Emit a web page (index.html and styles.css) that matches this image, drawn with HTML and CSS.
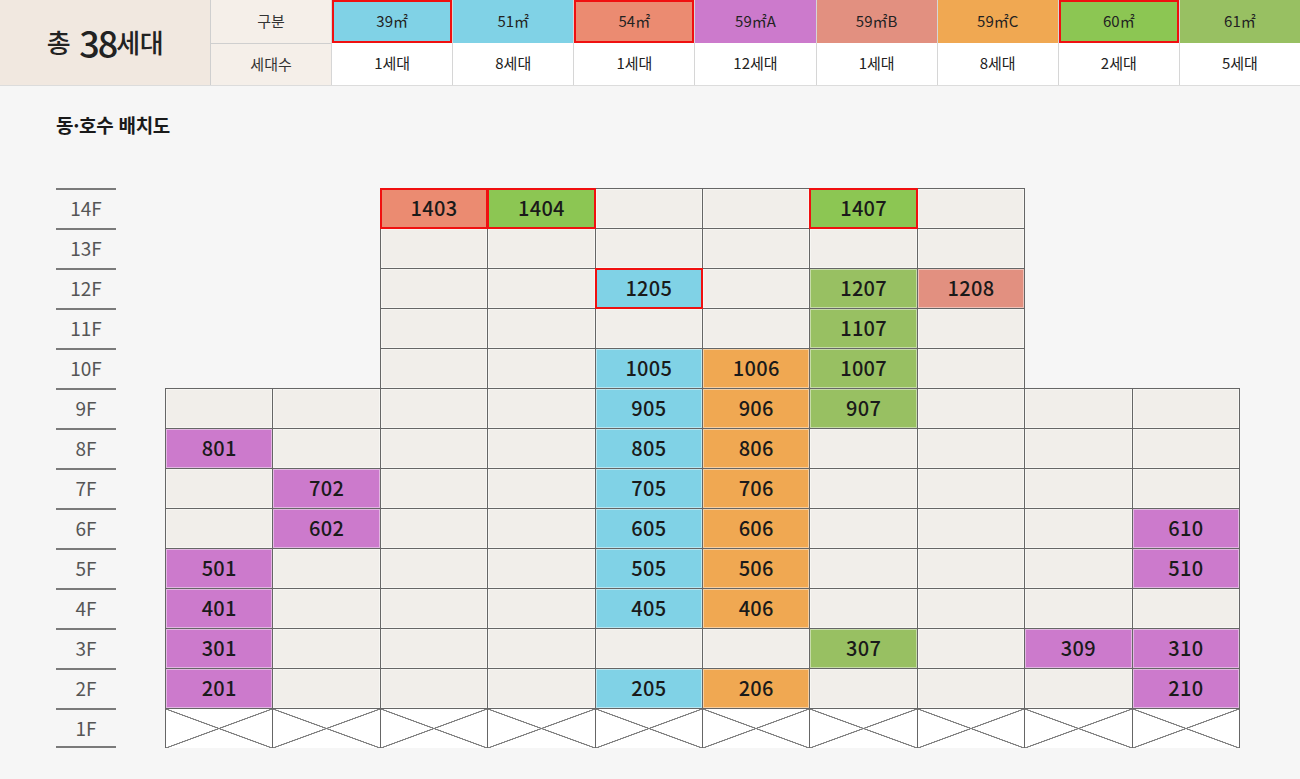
FILE: index.html
```html
<!DOCTYPE html>
<html lang="ko">
<head>
<meta charset="utf-8">
<title>동·호수 배치도</title>
<link rel="stylesheet" href="styles.css">
</head>
<body>
<header class="summary">
  <div class="total">총 <b>38</b>세대</div>
  <div class="th">구분</div>
  <div class="ty c39 hl">39㎡</div>
  <div class="ty c51">51㎡</div>
  <div class="ty c54 hl">54㎡</div>
  <div class="ty c59a">59㎡A</div>
  <div class="ty c59b">59㎡B</div>
  <div class="ty c59c">59㎡C</div>
  <div class="ty c60 hl">60㎡</div>
  <div class="ty c61">61㎡</div>
  <div class="th th-b">세대수</div>
  <div class="cnt">1세대</div>
  <div class="cnt">8세대</div>
  <div class="cnt">1세대</div>
  <div class="cnt">12세대</div>
  <div class="cnt">1세대</div>
  <div class="cnt">8세대</div>
  <div class="cnt">2세대</div>
  <div class="cnt">5세대</div>
</header>

<main class="layout">
  <h2 class="title">동·호수 배치도</h2>
  <div class="plan">
    <div class="fl">14F</div>
    <div class="x"></div><div class="x"></div>
    <div class="u c54 hl">1403</div><div class="u c60 hl">1404</div><div class="u"></div><div class="u"></div><div class="u c60 hl">1407</div><div class="u"></div>
    <div class="x"></div><div class="x"></div>

    <div class="fl">13F</div>
    <div class="x"></div><div class="x"></div>
    <div class="u"></div><div class="u"></div><div class="u"></div><div class="u"></div><div class="u"></div><div class="u"></div>
    <div class="x"></div><div class="x"></div>

    <div class="fl">12F</div>
    <div class="x"></div><div class="x"></div>
    <div class="u"></div><div class="u"></div><div class="u c39 hl">1205</div><div class="u"></div><div class="u c61">1207</div><div class="u c59b">1208</div>
    <div class="x"></div><div class="x"></div>

    <div class="fl">11F</div>
    <div class="x"></div><div class="x"></div>
    <div class="u"></div><div class="u"></div><div class="u"></div><div class="u"></div><div class="u c61">1107</div><div class="u"></div>
    <div class="x"></div><div class="x"></div>

    <div class="fl">10F</div>
    <div class="x"></div><div class="x"></div>
    <div class="u"></div><div class="u"></div><div class="u c51">1005</div><div class="u c59c">1006</div><div class="u c61">1007</div><div class="u"></div>
    <div class="x"></div><div class="x"></div>

    <div class="fl">9F</div>
    <div class="u"></div><div class="u"></div><div class="u"></div><div class="u"></div><div class="u c51">905</div><div class="u c59c">906</div><div class="u c61">907</div><div class="u"></div><div class="u"></div><div class="u"></div>

    <div class="fl">8F</div>
    <div class="u c59a">801</div><div class="u"></div><div class="u"></div><div class="u"></div><div class="u c51">805</div><div class="u c59c">806</div><div class="u"></div><div class="u"></div><div class="u"></div><div class="u"></div>

    <div class="fl">7F</div>
    <div class="u"></div><div class="u c59a">702</div><div class="u"></div><div class="u"></div><div class="u c51">705</div><div class="u c59c">706</div><div class="u"></div><div class="u"></div><div class="u"></div><div class="u"></div>

    <div class="fl">6F</div>
    <div class="u"></div><div class="u c59a">602</div><div class="u"></div><div class="u"></div><div class="u c51">605</div><div class="u c59c">606</div><div class="u"></div><div class="u"></div><div class="u"></div><div class="u c59a">610</div>

    <div class="fl">5F</div>
    <div class="u c59a">501</div><div class="u"></div><div class="u"></div><div class="u"></div><div class="u c51">505</div><div class="u c59c">506</div><div class="u"></div><div class="u"></div><div class="u"></div><div class="u c59a">510</div>

    <div class="fl">4F</div>
    <div class="u c59a">401</div><div class="u"></div><div class="u"></div><div class="u"></div><div class="u c51">405</div><div class="u c59c">406</div><div class="u"></div><div class="u"></div><div class="u"></div><div class="u"></div>

    <div class="fl">3F</div>
    <div class="u c59a">301</div><div class="u"></div><div class="u"></div><div class="u"></div><div class="u"></div><div class="u"></div><div class="u c61">307</div><div class="u"></div><div class="u c59a">309</div><div class="u c59a">310</div>

    <div class="fl">2F</div>
    <div class="u c59a">201</div><div class="u"></div><div class="u"></div><div class="u"></div><div class="u c51">205</div><div class="u c59c">206</div><div class="u"></div><div class="u"></div><div class="u"></div><div class="u c59a">210</div>

    <div class="fl fl-last">1F</div>
    <div class="u pil"></div><div class="u pil"></div><div class="u pil"></div><div class="u pil"></div><div class="u pil"></div><div class="u pil"></div><div class="u pil"></div><div class="u pil"></div><div class="u pil"></div><div class="u pil"></div>
  </div>
</main>
</body>
</html>
```

FILE: styles.css
```css
* { box-sizing: border-box; }

html, body {
  margin: 0;
  padding: 0;
  background: #f6f6f6;
  font-family: "Noto Sans CJK KR", "Noto Sans", "Liberation Sans", sans-serif;
  color: #222;
}

/* ---------- summary header ---------- */
.summary {
  display: grid;
  grid-template-columns: 210px repeat(9, 1fr);
  grid-template-rows: 43px 42px;
  border-bottom: 1px solid #dcdcdc;
  background: #fff;
}

.total {
  grid-row: 1 / span 2;
  display: flex;
  align-items: center;
  justify-content: center;
  padding-bottom: 2px;
  background: #f1e8e0;
  font-size: 26px;
  font-weight: 500;
  color: #222;
  letter-spacing: -0.5px;
}

.total b {
  font-size: 36px;
  font-weight: 500;
  margin-left: 9px;
  letter-spacing: -2px;
}

.th {
  display: flex;
  align-items: center;
  justify-content: center;
  padding-bottom: 3px;
  background: #f5efe9;
  font-size: 15px;
  color: #333;
  border-left: 1px solid #cfcfcf;
}

.th-b { border-top: 1px solid #cfcfcf; }

.ty, .cnt {
  display: flex;
  align-items: center;
  justify-content: center;
  padding-bottom: 3px;
  font-size: 15px;
  color: #222;
  border-left: 1px solid #d6d6d6;
}

.cnt { background: #fff; }

.ty.hl { box-shadow: inset 0 0 0 2px #f01010; }

/* type colours */
.c39 { background: #80d2e6; }
.c51 { background: #80d2e6; }
.c54 { background: #eb8b71; }
.c59a { background: #cc7acc; }
.c59b { background: #e29080; }
.c59c { background: #f0a852; }
.c60 { background: #8cc653; }
.c61 { background: #98c062; }

/* ---------- layout plan ---------- */
.layout {
  padding: 25px 0 0 56px;
}

.title {
  margin: 0;
  font-size: 19px;
  font-weight: 700;
  line-height: 28px;
  color: #1a1a1a;
  letter-spacing: -0.3px;
}

.plan {
  margin-top: 49px;
  width: 1183px;
  display: grid;
  grid-template-columns: 109px repeat(10, 1fr);
  grid-auto-rows: 40px;
}

.fl {
  width: 60px;
  display: flex;
  align-items: center;
  justify-content: center;
  padding-bottom: 3px;
  border-top: 2px solid #7a7a7a;
  font-size: 19px;
  color: #555;
}

.fl-last { border-bottom: 2px solid #7a7a7a; padding-bottom: 1px; }

.u {
  border: 1px solid #666;
  margin: 0 -1px -1px 0;
  padding-bottom: 3px;
  background: #f1eeea;
  box-shadow: inset 0 0 0 1px rgba(255, 255, 255, 0.45);
  display: flex;
  align-items: center;
  justify-content: center;
  font-size: 20px;
  font-weight: 500;
  color: #1a1a1a;
  letter-spacing: 0.3px;
}

.u.c39 { background: #80d2e6; }
.u.c51 { background: #80d2e6; }
.u.c54 { background: #eb8b71; }
.u.c59a { background: #cc7acc; }
.u.c59b { background: #e29080; }
.u.c59c { background: #f0a852; }
.u.c60 { background: #8cc653; }
.u.c61 { background: #98c062; }

.u.hl {
  position: relative;
  z-index: 2;
  border: 2px solid #f01010;
  box-shadow: none;
}

.u.pil {
  background-color: #fff;
  background-image:
    linear-gradient(to top right, transparent calc(50% - 0.8px), #7e7e7e calc(50% - 0.4px), #7e7e7e calc(50% + 0.4px), transparent calc(50% + 0.8px)),
    linear-gradient(to bottom right, transparent calc(50% - 0.8px), #7e7e7e calc(50% - 0.4px), #7e7e7e calc(50% + 0.4px), transparent calc(50% + 0.8px));
  box-shadow: none;
  border-bottom-color: #8a8a8a;
}
```
